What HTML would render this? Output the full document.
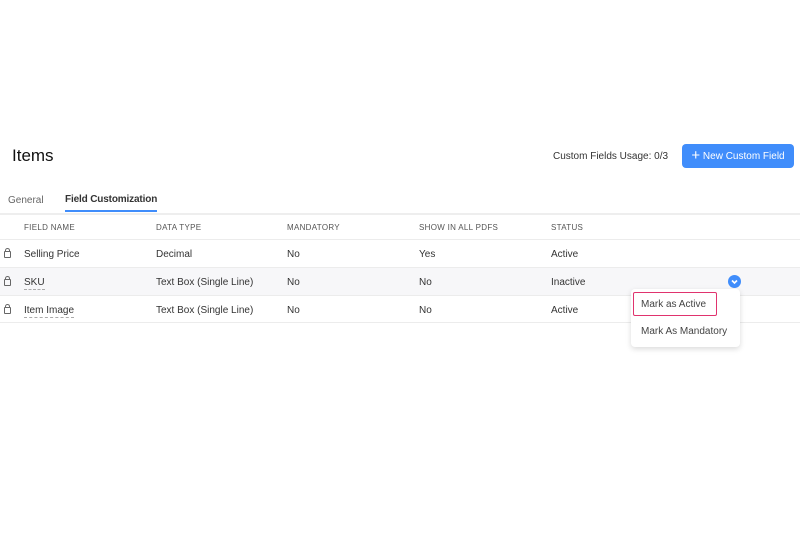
<!DOCTYPE html>
<html><head><style>
body{margin:0;width:800px;height:533px;background:#fff;font-family:"Liberation Sans",sans-serif;position:relative;overflow:hidden;color:#21263c}
.a{position:absolute;white-space:nowrap}
.t{font-size:10px;color:#333}
.h{font-size:8px;color:#555;letter-spacing:.3px}
.line{position:absolute;left:0;width:800px;height:1px;background:#ececec}
.lock{position:absolute;left:4px;width:5px;height:5px;border:1px solid #666;border-radius:1px}
.lock:before{content:"";position:absolute;left:0;top:-4px;width:3px;height:3px;border:1px solid #666;border-bottom:none;border-radius:3px 3px 0 0}
.dot{border-bottom:1px dashed #aaa;padding-bottom:1px}
</style></head><body>
<div class="a" style="left:12px;top:146px;font-size:17px;color:#111">Items</div>
<div class="a" style="left:553px;top:151px;font-size:10px;color:#333">Custom Fields Usage: 0/3</div>
<div class="a" style="left:682px;top:144px;width:112px;height:24px;background:#408dfb;border-radius:4px;color:#fff;font-size:10px;line-height:24px;text-align:center"><span style="font-size:15px;vertical-align:-1px">+</span> New Custom Field</div>
<div class="a" style="left:8px;top:195px;font-size:10px;color:#666">General</div>
<div class="a" style="left:65px;top:194px;font-size:10px;font-weight:bold;color:#333;letter-spacing:-.15px">Field Customization</div>
<div class="a" style="left:65px;top:210px;width:92px;height:2px;background:#408dfb"></div>
<div class="line" style="top:213px;height:2px;background:#eee"></div>
<div class="a h" style="left:24px;top:223px">FIELD NAME</div>
<div class="a h" style="left:156px;top:223px">DATA TYPE</div>
<div class="a h" style="left:287px;top:223px">MANDATORY</div>
<div class="a h" style="left:419px;top:223px">SHOW IN ALL PDFS</div>
<div class="a h" style="left:551px;top:223px">STATUS</div>
<div class="line" style="top:239px"></div>
<div class="a" style="left:0;top:267px;width:800px;height:28px;background:#f7f7f9"></div>
<div class="line" style="top:267px"></div>
<div class="line" style="top:295px"></div>
<div class="line" style="top:322px"></div>
<div class="lock" style="top:251px"></div>
<div class="lock" style="top:279px"></div>
<div class="lock" style="top:307px"></div>
<div class="a t" style="left:24px;top:249px">Selling Price</div>
<div class="a t" style="left:156px;top:249px">Decimal</div>
<div class="a t" style="left:287px;top:249px">No</div>
<div class="a t" style="left:419px;top:249px">Yes</div>
<div class="a t" style="left:551px;top:249px">Active</div>
<div class="a t" style="left:24px;top:277px"><span class="dot">SKU</span></div>
<div class="a t" style="left:156px;top:277px">Text Box (Single Line)</div>
<div class="a t" style="left:287px;top:277px">No</div>
<div class="a t" style="left:419px;top:277px">No</div>
<div class="a t" style="left:551px;top:277px">Inactive</div>
<div class="a t" style="left:24px;top:305px"><span class="dot">Item Image</span></div>
<div class="a t" style="left:156px;top:305px">Text Box (Single Line)</div>
<div class="a t" style="left:287px;top:305px">No</div>
<div class="a t" style="left:419px;top:305px">No</div>
<div class="a t" style="left:551px;top:305px">Active</div>
<div class="a" style="left:728px;top:275px;width:13px;height:13px;border-radius:50%;background:#408dfb"><svg width="13" height="13" viewBox="0 0 13 13"><path d="M4 5.5L6.5 8 9 5.5" stroke="#fff" stroke-width="1.6" fill="none"/></svg></div>
<div class="a" style="left:631px;top:289px;width:109px;height:58px;background:#fff;border-radius:4px;box-shadow:0 2px 6px rgba(0,0,0,.15)"></div>
<div class="a" style="left:633px;top:292px;width:82px;height:22px;border:1.5px solid #e0336e;border-radius:2px"></div>
<div class="a t" style="left:641px;top:299px;color:#444">Mark as Active</div>
<div class="a t" style="left:641px;top:326px;color:#444">Mark As Mandatory</div>
</body></html>
